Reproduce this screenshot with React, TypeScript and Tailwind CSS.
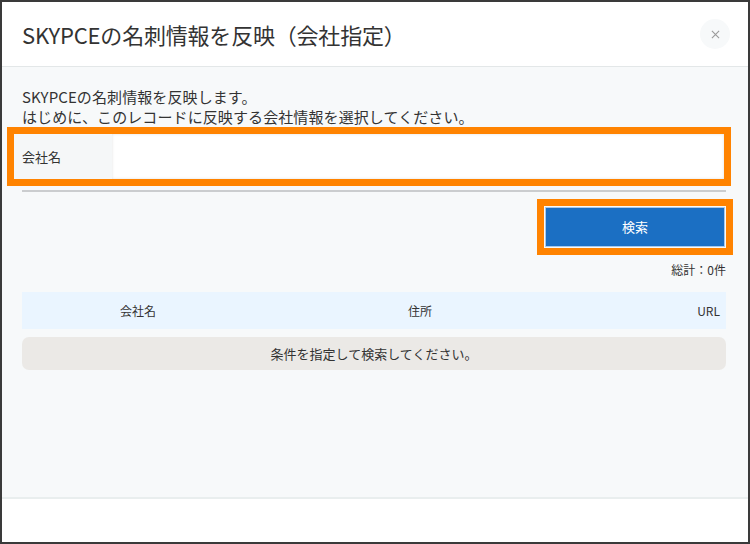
export default function App() {
  return (
    <div
      className="flex h-[544px] w-[750px] flex-col overflow-hidden border-2 border-[#3a3a3a] bg-white text-[#333]"
      style={{ fontFamily: '"Noto Sans CJK JP", "Noto Sans", sans-serif' }}
    >
      {/* header */}
      <div className="flex h-[65px] shrink-0 items-center justify-between border-b border-[#e3e7e8] pl-5 pr-[18px]">
        <h1 className="text-[22px] leading-none tracking-[-0.2px]">SKYPCEの名刺情報を反映（会社指定）</h1>
        <button className="flex h-[30px] w-[30px] items-center justify-center rounded-full bg-[#f7f9fa] text-[#999]">
          <svg width="9" height="9" viewBox="0 0 10 10">
            <path d="M1 1 L9 9 M9 1 L1 9" stroke="#9a9a9a" strokeWidth="1.2" />
          </svg>
        </button>
      </div>

      {/* body */}
      <div className="flex flex-1 flex-col bg-[#f7f9fa] pl-5 pr-[22px] pt-[20px]">
        <p className="text-[15px] leading-[20px] tracking-[0.1px]">
          SKYPCEの名刺情報を反映します。
          <br />
          はじめに、このレコードに反映する会社情報を選択してください。
        </p>

        <div className="-ml-[15px] -mr-[5px] flex h-[59px] border-[7px] border-[#ff8300]">
          <div className="flex w-[98px] items-center bg-[#f5f7f8] pl-2 text-[13px]">会社名</div>
          <div className="flex-1 bg-white shadow-[inset_0_0_3px_rgba(0,0,0,0.12)]" />
        </div>

        <div className="mt-[4px] h-[2px] bg-[#cbcdcf]" />

        <div className="flex justify-end">
          <div className="-mr-[7px] mt-[7px] border-[7px] border-[#ff8300] p-px">
            <button className="flex h-[40px] w-[180px] items-center justify-center border border-[#a9c9ea] bg-[#1b6fc3] text-[13px] text-white">
              検索
            </button>
          </div>
        </div>

        <div className="mt-[7px] text-right text-[12px] leading-[16px]">総計：0件</div>

        <div className="mt-[14px] grid h-[37px] grid-cols-[232px_332px_1fr] items-center bg-[#eaf5ff] text-[12px]">
          <div className="text-center">会社名</div>
          <div className="text-center">住所</div>
          <div className="pr-[6px] text-right">URL</div>
        </div>

        <div className="mt-[8px] flex h-[33px] items-center justify-center rounded-[7px] bg-[#ebe9e6] text-[13px]">
          条件を指定して検索してください。
        </div>
      </div>

      {/* footer */}
      <div className="h-[45px] shrink-0 border-t-2 border-[#e9eeee] bg-white" />
    </div>
  )
}
